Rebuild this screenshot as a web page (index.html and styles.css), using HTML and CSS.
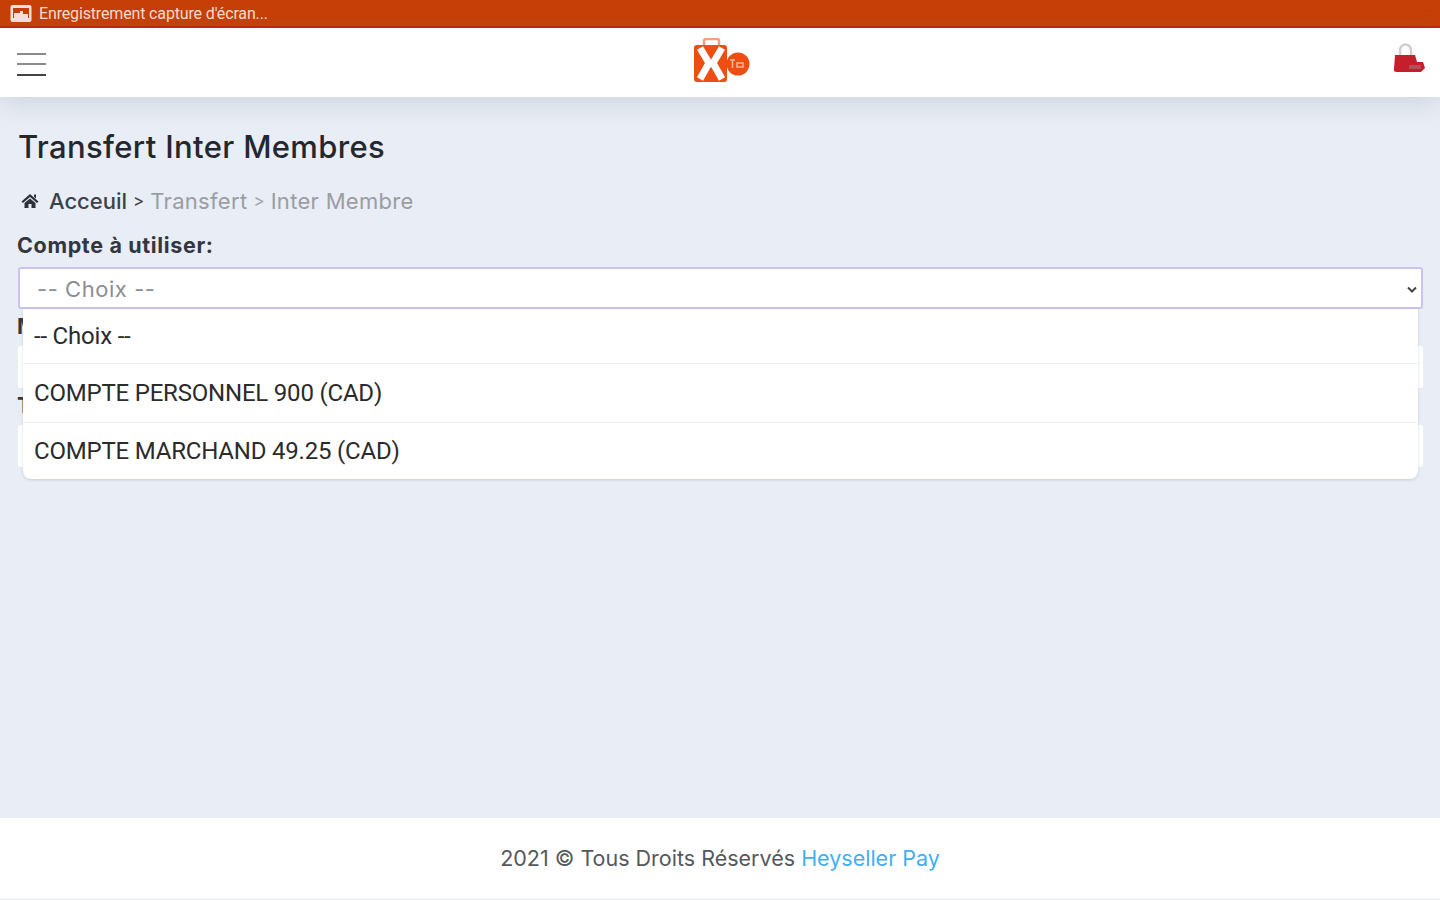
FILE: index.html
```html
<!DOCTYPE html>
<html lang="fr">
<head>
<meta charset="utf-8">
<title>Transfert Inter Membres</title>
<link rel="stylesheet" href="styles.css">
</head>
<body>
<div class="page">
  <div class="status">
    <svg class="status-icon" width="22" height="17" viewBox="0 0 22 17"><rect x="0.500" y="0" width="21" height="17" rx="2" fill="#f8e3d9"/><rect x="3" y="3" width="16" height="10" fill="#c63f06"/><path d="M4 8 H10 V6 H13 V9 H18 V13 H4z" fill="#f8e3d9"/></svg>
    <span>Enregistrement capture d'écran...</span>
  </div>
  <header class="topbar">
    <div class="burger"><i></i><i></i><i></i></div>
    <svg class="logo" width="58" height="46" viewBox="0 0 58 46">
      <path d="M11 7 V3 Q11 1 13 1 H24 Q26 1 26 3 V7" fill="none" stroke="#f4a07c" stroke-width="2.500"/>
      <rect x="1" y="7" width="33" height="37" rx="3" fill="#ee4e12"/>
      <circle cx="45" cy="26" r="11.500" fill="#ee4e12"/>
      <path d="M7 10 L16 25 L7 41 M29 10 L20 25 L29 41" stroke="#fff" stroke-width="7" fill="none"/>
      <path d="M13 25 H23" stroke="#fff" stroke-width="6"/>
      <path d="M37 22 H42 M39.500 22 V30 M44 25 H50 V29 H44z" stroke="#f9b79b" stroke-width="1.500" fill="none"/>
    </svg>
    <svg class="bag" width="34" height="34" viewBox="0 0 34 34">
      <path d="M8 14 V8 a5.500 5.500 0 0 1 11 0 V14" fill="none" stroke="#cfcfcf" stroke-width="2.500"/>
      <path d="M3 13 H23 L25 20 H31 L33 26 L29 30 H5 Q1 30 2 27z" fill="#c41f2a"/>
      <path d="M17 25 H29" stroke="#a9545a" stroke-width="4"/>
    </svg>
  </header>
  <main class="content">
    <h1 class="title">Transfert Inter Membres</h1>
    <nav class="crumbs">
      <svg class="home" width="18" height="16" viewBox="0 0 18 16"><path d="M9 1 L17.500 8.500 L16 10 L9 4 L2 10 L0.500 8.500z M13 1.500 h2 v4 l-2 -1.800z M3.500 10 L9 5.500 L14.500 10 V15 H10.500 V11 H7.500 V15 H3.500z" fill="#2d3139"/></svg>
      <span class="crumb-home">Acceuil</span>
      <span class="crumb-sep">&gt;</span>
      <span class="crumb-muted">Transfert</span>
      <span class="crumb-sep-muted">&gt;</span>
      <span class="crumb-muted">Inter Membre</span>
    </nav>
    <form class="form">
      <div class="field">
        <label class="label">Compte à utiliser:</label>
        <div class="select-wrap">
          <div class="select">
            <span class="select-text">-- Choix --</span>
            <svg width="10" height="7" viewBox="0 0 10 7"><path d="M1 1.500 L5 5.500 L9 1.500" fill="none" stroke="#444" stroke-width="2"/></svg>
          </div>
          <ul class="menu">
            <li class="menu-first">-- Choix --</li>
            <li>COMPTE PERSONNEL 900 (CAD)</li>
            <li class="menu-last">COMPTE MARCHAND 49.25 (CAD)</li>
          </ul>
        </div>
      </div>
      <div class="field">
        <label class="label">Montant:</label>
        <div class="input"></div>
      </div>
      <div class="field">
        <label class="label">Type:</label>
        <div class="input"></div>
      </div>
    </form>
  </main>
  <footer class="footer">
    <span>2021 © Tous Droits Réservés <a class="brand">Heyseller Pay</a></span>
  </footer>
</div>
</body>
</html>
```
FILE: styles.css
```css
* { box-sizing: border-box; }
html, body { margin: 0; height: 100%; }
body { font-family: "Inter", "Open Sans", sans-serif; background: #e9edf5; color: #2d3139; overflow: hidden; }
.page { height: 900px; display: flex; flex-direction: column; }

.status { height: 28px; flex: none; background: #c63f06; border-bottom: 2px solid #c0240a; display: flex; align-items: center; gap: 7px; padding: 0 10px; color: #f6dcd0; font-family: "Roboto", sans-serif; font-size: 16px; letter-spacing: -0.15px; }
.status-icon { flex: none; }

.topbar { height: 69px; flex: none; background: #fff; display: flex; align-items: center; justify-content: space-between; padding: 0 14px 0 17px; box-shadow: 0 6px 26px rgba(120, 130, 150, .24); position: relative; z-index: 1; }
.burger { width: 29px; display: flex; flex-direction: column; gap: 8.500px; margin-top: 3px; }
.burger i { display: block; height: 2px; background: #8a8a8a; }
.burger i:last-child { background: #444; }
.logo { margin-top: -4px; margin-left: 5px; }
.bag { margin-top: -8px; }

.content { flex: 1; padding: 31px 17px 0; }
.title { margin: 0 0 0 1px; font-size: 31px; line-height: 38px; font-weight: 500; color: #24272e; letter-spacing: .35px; }
.crumbs { display: flex; align-items: center; margin-top: 21px; font-size: 22px; line-height: 28px; padding-left: 4px; }
.home { margin-right: 10px; }
.crumb-home { color: #3d4149; font-weight: 500; }
.crumb-sep { color: #3d4149; margin: 0 6px; font-size: 17px; }
.crumb-sep-muted { color: #a3a6ac; margin: 0 6px; font-size: 17px; }
.crumb-muted { color: #9a9da3; letter-spacing: .3px; }

.form { margin-top: 16px; }
.field { margin-bottom: 3px; }
.label { display: block; font-size: 21.500px; line-height: 28px; font-weight: 700; color: #33363f; letter-spacing: .65px; }
.select-wrap { position: relative; margin-top: 8px; }
.select { height: 42px; background: #fff; border: 2px solid #c9c3f2; border-radius: 3px; margin-left: 1px; display: flex; align-items: center; justify-content: space-between; padding: 2px 4px 0 17px; color: #8b8e94; font-size: 22px; letter-spacing: .55px; }
.menu { list-style: none; margin: 0; padding: 0; position: absolute; left: 6px; right: 5px; top: 42px; background: #fff; border-radius: 0 0 8px 8px; box-shadow: 0 1px 3px rgba(120, 125, 140, .28); font-family: "Roboto", sans-serif; font-size: 24px; letter-spacing: -.2px; color: #2b2b2b; z-index: 2; }
.menu li { height: 59px; display: flex; align-items: center; padding-left: 11px; border-bottom: 1px solid #f0f0f0; }
.menu .menu-first { height: 55px; }
.menu .menu-last { height: 56px; border-bottom: 0; }
.input { height: 42px; background: #fff; border-radius: 3px; margin: 6px 0 0 1px; }

.footer { height: 82px; flex: none; background: #fff; border-bottom: 2px solid #f1f3f6; display: flex; align-items: center; justify-content: center; font-size: 21.500px; color: #55585e; }
.brand { color: #3fb0f5; }
```
